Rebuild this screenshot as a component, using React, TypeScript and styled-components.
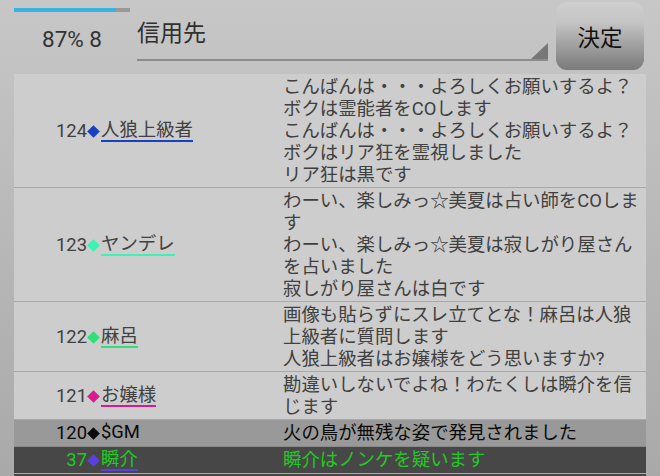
import styled, { createGlobalStyle } from "styled-components"

const GlobalStyle = createGlobalStyle`
  html, body {
    margin: 0;
    padding: 0;
  }
  body {
    font-family: Roboto, "Noto Sans CJK JP", sans-serif;
    background: #c4c4c4;
  }
`

const Screen = styled.div`
  width: 660px;
  height: 476px;
  overflow: hidden;
  box-sizing: border-box;
  padding: 0 14px;
  background: linear-gradient(#c7c7c7, #a9a9a9);
`

const Header = styled.div`
  display: flex;
  height: 74px;
`

const Status = styled.div`
  width: 116px;
  display: flex;
  flex-direction: column;
  align-items: center;
`

const Progress = styled.div`
  width: 116px;
  height: 4px;
  margin-top: 8px;
  background: #999999;
`

const ProgressFill = styled.div`
  height: 100%;
  background: #3ab3e2;
`

const StatusText = styled.div`
  margin-top: 14px;
  font-size: 22.5px;
  line-height: 26px;
  color: #333333;
`

const Select = styled.div`
  position: relative;
  flex: 1;
  height: 61px;
  margin-left: 7px;
  border-bottom: 2px solid #8c8c8c;
  font-size: 23px;
  line-height: 28px;
  padding-top: 20px;
  box-sizing: border-box;
  color: #303030;

  &::after {
    content: "";
    position: absolute;
    right: 0;
    bottom: 0;
    border-left: 17px solid transparent;
    border-bottom: 16px solid #777777;
  }
`

const Button = styled.button`
  width: 88px;
  height: 68px;
  margin: 2px 2px 0 8px;
  border: none;
  border-radius: 11px;
  background: linear-gradient(#cfcfcf, #c4c4c4 30%, #7a7a7a);
  font-family: Roboto, "Noto Sans CJK JP", sans-serif;
  font-size: 22.5px;
  color: #111111;
  padding: 0;
`

const List = styled.div`
  display: flex;
  flex-direction: column;
`

const ListEnd = styled.div`
  height: 12px;
  background: #474747;
`

const themes = {
  normal: { bg: "#cdcdcd", text: "#404040", line: "#a9a9a9", pad: "2px 0 1px" },
  gm: { bg: "#999999", text: "#0a0a0a", line: "#8a8a8a", pad: "2px 0" },
  self: { bg: "#474747", text: "#22c922", line: "#a9a9a9", pad: "2px 0" },
}

type Kind = keyof typeof themes

const Row = styled.div<{ $kind: Kind }>`
  display: grid;
  grid-template-columns: 73px 196px 1fr;
  align-items: center;
  padding: ${({ $kind }) => themes[$kind].pad};
  background: ${({ $kind }) => themes[$kind].bg};
  color: ${({ $kind }) => themes[$kind].text};
  border-bottom: 1px solid ${({ $kind }) => themes[$kind].line};
  font-size: 18.4px;
  line-height: 22px;
`

const No = styled.div`
  text-align: right;
`

const Speaker = styled.div`
  display: flex;
  align-items: center;
`

const Diamond = styled.span<{ $color: string }>`
  display: inline-block;
  width: 9px;
  height: 9px;
  margin: 0 3px 0 2px;
  background: ${({ $color }) => $color};
  transform: rotate(45deg);
`

const Name = styled.span<{ $color?: string }>`
  display: inline-block;
  line-height: 20px;
  border-bottom: 2px solid ${({ $color }) => $color || "transparent"};
`

const Message = styled.div`
  padding-right: 2px;
  word-break: break-all;
`

type Entry = {
  no: number
  name: string
  color: string
  underline?: boolean
  kind: Kind
  lines: string[]
}

const entries: Entry[] = [
  {
    no: 124,
    name: "人狼上級者",
    color: "#1a3fbf",
    underline: true,
    kind: "normal",
    lines: [
      "こんばんは・・・よろしくお願いするよ？",
      "ボクは霊能者をCOします",
      "こんばんは・・・よろしくお願いするよ？",
      "ボクはリア狂を霊視しました",
      "リア狂は黒です",
    ],
  },
  {
    no: 123,
    name: "ヤンデレ",
    color: "#3cf2b4",
    underline: true,
    kind: "normal",
    lines: [
      "わーい、楽しみっ☆美夏は占い師をCOします",
      "わーい、楽しみっ☆美夏は寂しがり屋さんを占いました",
      "寂しがり屋さんは白です",
    ],
  },
  {
    no: 122,
    name: "麻呂",
    color: "#2fe07a",
    underline: true,
    kind: "normal",
    lines: [
      "画像も貼らずにスレ立てとな！麻呂は人狼上級者に質問します",
      "人狼上級者はお嬢様をどう思いますか?",
    ],
  },
  {
    no: 121,
    name: "お嬢様",
    color: "#d81b8c",
    underline: true,
    kind: "normal",
    lines: ["勘違いしないでよね！わたくしは瞬介を信じます"],
  },
  {
    no: 120,
    name: "$GM",
    color: "#0a0a0a",
    kind: "gm",
    lines: ["火の鳥が無残な姿で発見されました"],
  },
  {
    no: 37,
    name: "瞬介",
    color: "#5b3fe0",
    underline: true,
    kind: "self",
    lines: ["瞬介はノンケを疑います"],
  },
]

export default function App() {
  return (
    <>
      <GlobalStyle />
      <Screen>
        <Header>
          <Status>
            <Progress>
              <ProgressFill style={{ width: "88%" }} />
            </Progress>
            <StatusText>87% 8</StatusText>
          </Status>
          <Select>信用先</Select>
          <Button>決定</Button>
        </Header>
        <List>
          {entries.map((e) => (
            <Row key={e.no} $kind={e.kind}>
              <No>{e.no}</No>
              <Speaker>
                <Diamond $color={e.color} />
                <Name $color={e.underline ? e.color : undefined}>{e.name}</Name>
              </Speaker>
              <Message>
                {e.lines.map((l, i) => (
                  <div key={i}>{l}</div>
                ))}
              </Message>
            </Row>
          ))}
          <ListEnd />
        </List>
      </Screen>
    </>
  )
}
